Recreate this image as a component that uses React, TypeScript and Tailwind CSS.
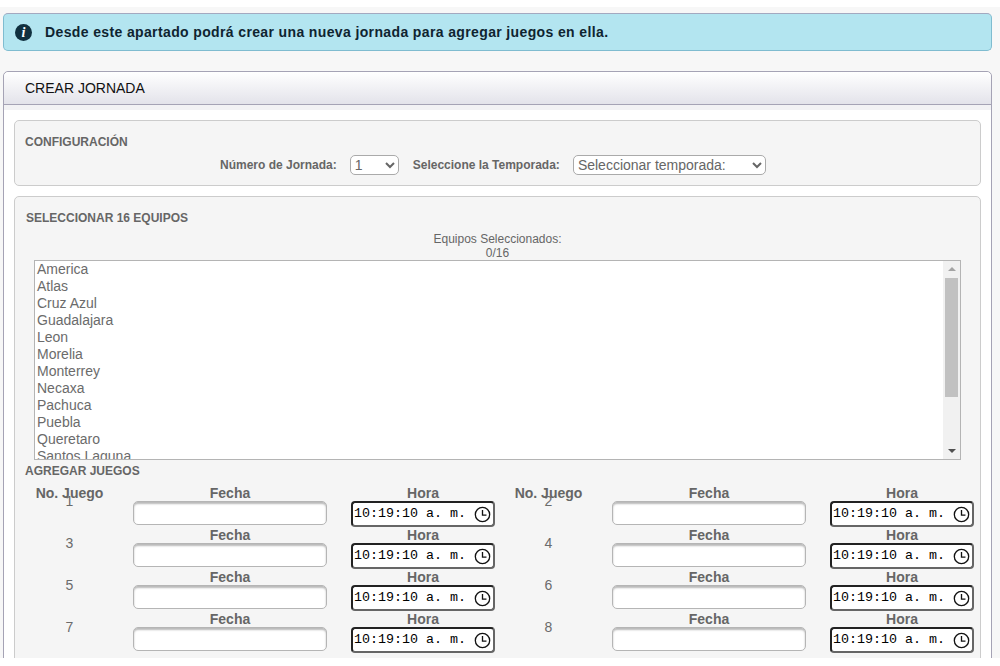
const equipos = [
  'America', 'Atlas', 'Cruz Azul', 'Guadalajara', 'Leon', 'Morelia',
  'Monterrey', 'Necaxa', 'Pachuca', 'Puebla', 'Queretaro', 'Santos Laguna',
];

const juegos = [
  [1, 2],
  [3, 4],
  [5, 6],
  [7, 8],
];

function ClockIcon() {
  return (
    <svg viewBox="0 0 18 18" className="h-[17px] w-[17px] shrink-0" fill="none" stroke="#111" strokeWidth="1.4">
      <circle cx="9" cy="9" r="7.6" />
      <path d="M9 4.2V9.6H13.2" />
    </svg>
  );
}

function Juego({ numero }: { numero: number }) {
  return (
    <div className="flex h-[42px] flex-1">
      <div className="w-[87px] pt-[-1px] text-center text-[14px] leading-[16px] text-[#6b6b6b]">
        <div className="mt-[8px]">{numero}</div>
      </div>
      <div className="ml-[20px] w-[194px] shrink-0">
        <div className="text-center text-[14px] font-bold leading-[16px] text-[#666]">Fecha</div>
        <div className="h-[24px] rounded-[5px] border border-[#b5b5b5] bg-white shadow-[inset_0_2px_2px_rgba(0,0,0,0.28)]" />
      </div>
      <div className="ml-[24px] w-[144px] shrink-0">
        <div className="text-center text-[14px] font-bold leading-[16px] text-[#666]">Hora</div>
        <div className="flex h-[26px] items-center justify-between rounded-[4px] border-2 border-t-[#222] border-l-[#222] border-r-[#666] border-b-[#666] bg-white pl-[1px] pr-[2px]">
          <span className="font-['Liberation_Mono',monospace] text-[13.33px] leading-none whitespace-pre text-black">10:19:10 a. m.</span>
          <ClockIcon />
        </div>
      </div>
    </div>
  );
}

function ListaEquipos() {
  return (
    <div className="mx-[8px] flex h-[200px] border border-[#b4b4b4] bg-white">
      <div className="flex-1 overflow-hidden pl-[2px] text-[14px] leading-[17px] text-[#6b6b6b]">
        {equipos.map((equipo) => (
          <div key={equipo}>{equipo}</div>
        ))}
      </div>
      <div className="flex w-[17px] flex-col items-center bg-[#f1f1f1]">
        <div className="mt-[6px] h-0 w-0 border-x-[4px] border-b-[4px] border-x-transparent border-b-[#a3a3a3]" />
        <div className="mt-[7px] h-[119px] w-[13px] bg-[#c1c1c1]" />
        <div className="mt-auto mb-[6px] h-0 w-0 border-x-[4px] border-t-[4px] border-x-transparent border-t-[#505050]" />
      </div>
    </div>
  );
}

export default function App() {
  return (
    <div className="h-[666px] overflow-hidden bg-white font-['Liberation_Sans',Arial,sans-serif]">
      <div className="mt-[7px] inline-block h-[651px] w-full overflow-hidden bg-[#f7f7f7] px-[3px] pt-[6px] pr-[8px] align-top">
        <div className="flex h-[38px] items-center rounded-[5px] border border-[#7fbcd0] border-t-[#a3a9c0] bg-[#b3e5f0] pl-[11px]">
          <span className="flex h-[17px] w-[17px] items-center justify-center rounded-full bg-[#10303f] font-['Liberation_Serif',serif] text-[14px] font-bold italic text-white">
            i
          </span>
          <p className="ml-[13px] text-[14px] font-bold tracking-[0.37px] text-[#0f2430]">
            Desde este apartado podrá crear una nueva jornada para agregar juegos en ella.
          </p>
        </div>

        <div className="mt-[20px] h-[600px] rounded-t-[5px] border border-[#a5a3b5] bg-white">
          <div className="flex h-[33px] items-center rounded-t-[5px] border-b border-[#a5a3b5] bg-gradient-to-b from-white to-[#e3e3ea] pl-[21px] text-[14px] text-[#111]">
            CREAR JORNADA
          </div>
          <div className="h-[5px] bg-[#f2f2f4]" />

          <div className="px-[10px] pt-[10px]">
            <section className="h-[66px] rounded-[5px] border border-[#ccc] bg-[#f5f5f5] px-[10px] pt-[14px]">
              <h2 className="text-[12px] font-bold leading-[15px] text-[#666]">CONFIGURACIÓN</h2>
              <div className="mt-[5px] flex items-center pl-[195px] text-[12px] font-bold text-[#666]">
                <span>Número de Jornada:</span>
                <select className="ml-[13px] h-[20px] w-[49px] rounded-[5px] border border-[#aaa] bg-white text-[14px] font-normal text-[#666]" defaultValue="1">
                  <option>1</option>
                </select>
                <span className="ml-[14px]">Seleccione la Temporada:</span>
                <select className="ml-[13px] h-[20px] w-[193px] rounded-[5px] border border-[#aaa] bg-white text-[14px] font-normal text-[#666]" defaultValue="">
                  <option value="">Seleccionar temporada:</option>
                </select>
              </div>
            </section>

            <section className="mt-[10px] h-[500px] rounded-[5px] border border-[#ccc] bg-[#f5f5f5] px-[11px] pt-[14px]">
              <h2 className="text-[12px] font-bold leading-[15px] text-[#666]">SELECCIONAR 16 EQUIPOS</h2>
              <div className="mt-[6px] text-center text-[12px] leading-[14px] text-[#666]">
                <div>Equipos Seleccionados:</div>
                <div>0/16</div>
              </div>
              <ListaEquipos />
              <h2 className="-ml-[1px] mt-[4px] text-[12px] font-bold leading-[15px] text-[#666]">AGREGAR JUEGOS</h2>
              <div className="relative mt-[6px]">
                <div className="absolute top-0 left-0 flex w-full text-[14px] font-bold leading-[16px] text-[#666]">
                  <span className="w-[87px] text-center">No. Juego</span>
                  <span className="ml-[392px] w-[87px] text-center">No. Juego</span>
                </div>
                {juegos.map(([izq, der]) => (
                  <div key={izq} className="flex gap-[10px]">
                    <Juego numero={izq} />
                    <Juego numero={der} />
                  </div>
                ))}
              </div>
            </section>
          </div>
        </div>
      </div>
    </div>
  );
}
